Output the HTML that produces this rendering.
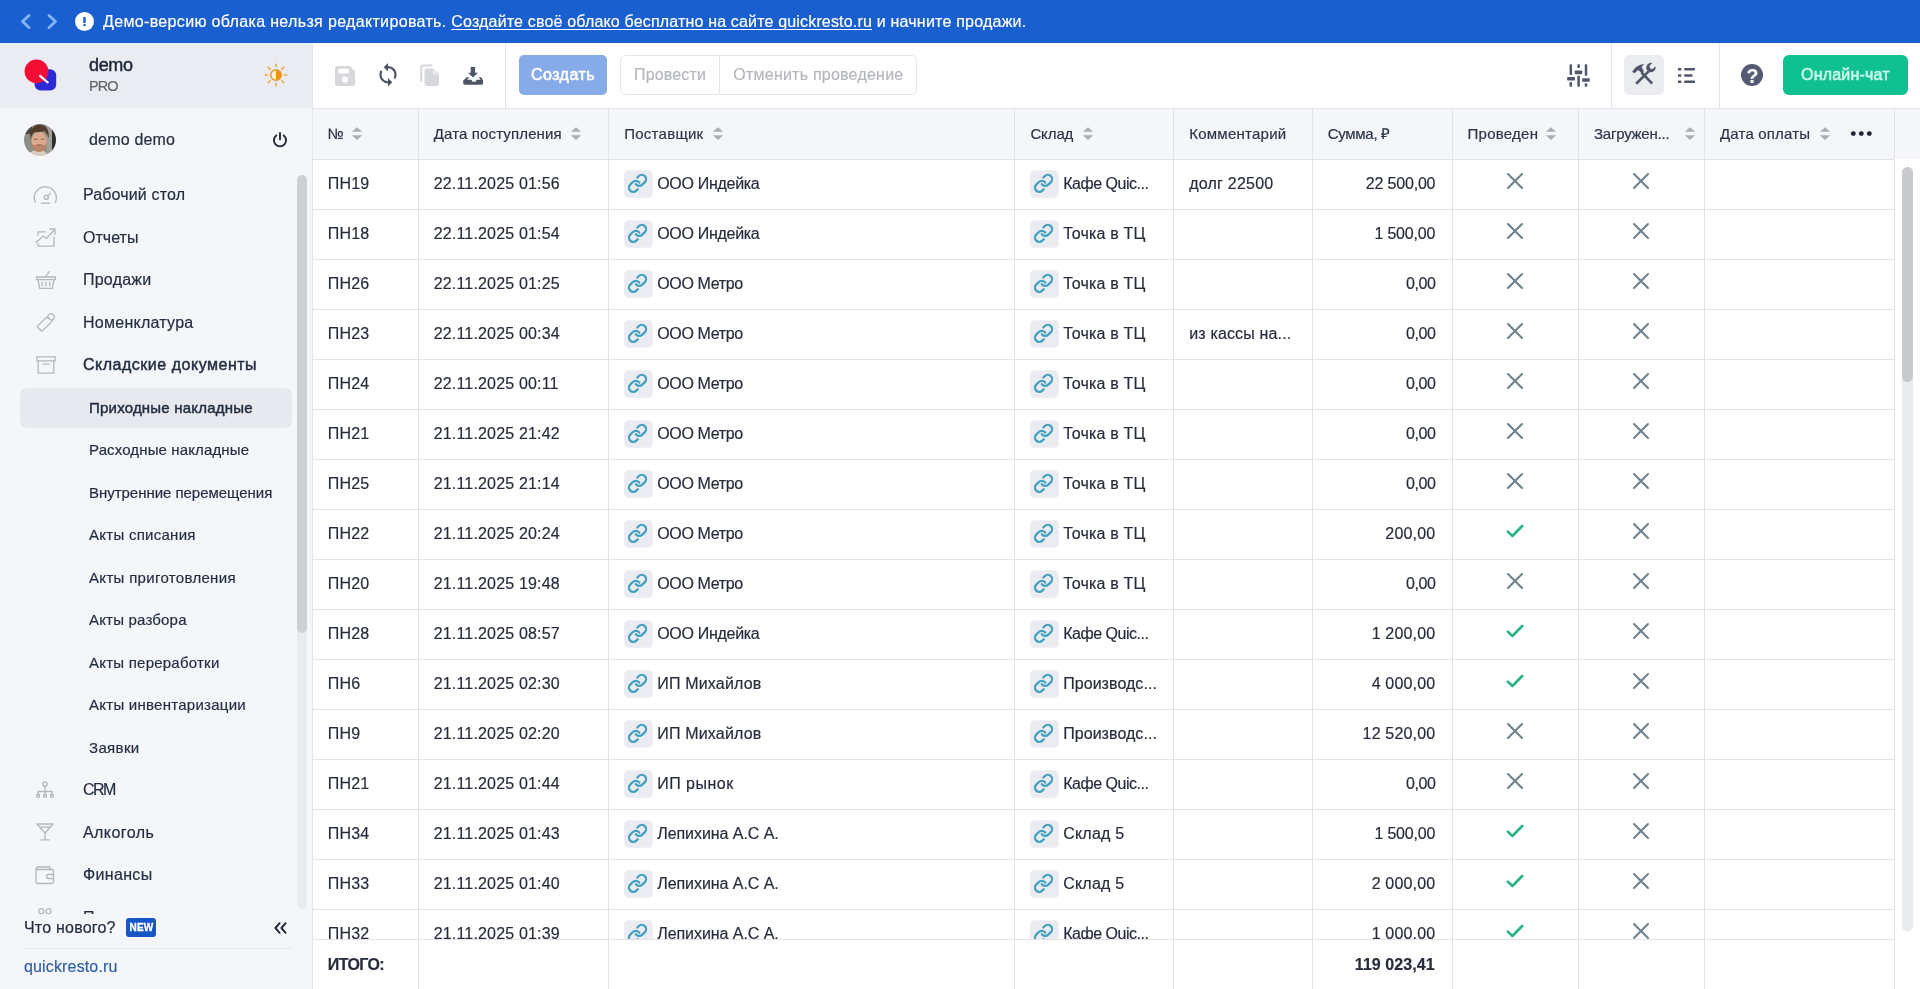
<!DOCTYPE html>
<html lang="ru">
<head>
<meta charset="utf-8">
<title>Приходные накладные</title>
<style>
*{box-sizing:border-box;margin:0;padding:0}
html,body{width:1920px;height:989px;overflow:hidden;background:#fff}
body{font-family:"Liberation Sans",sans-serif;color:#222b40;position:relative;font-size:16px}
div,span,svg{position:absolute}
span{white-space:pre;line-height:20px;-webkit-text-stroke:0.18px currentColor}
#banner,#side,#main{will-change:transform}
svg{display:block;overflow:visible}
#banner{left:0;top:0;width:1920px;height:43px;background:#1a5fd0;color:#fff}
#side{left:0;top:43px;width:312px;height:946px;background:#f5f6fa;overflow:hidden}
#sidehead{left:0;top:0;width:312px;height:65px;background:#ebecf2}
#main{left:312px;top:43px;width:1608px;height:946px;background:#fff;border-left:1px solid #e4e6ea;overflow:hidden}
.nav{left:83px;font-size:16px;color:#242d42}
.sub{left:89px;font-size:15px;color:#242d42}
.b{font-weight:700}
.m{-webkit-text-stroke:0.45px currentColor}
.vline{width:1px;background:#e2e3e7}
.hline{height:1px;background:#e2e3e7}
.th{font-size:15px;color:#2b3346}
.td{font-size:16px;color:#272c3c}
</style>
</head>
<body>
<div id="banner">
<svg style="left:20px;top:14px" width="11" height="15" viewBox="0 0 11 15"><path d="M9 1.5L2.5 7.5L9 13.5" fill="none" stroke="#82b4f8" stroke-width="2.900" stroke-linecap="round" stroke-linejoin="round"/></svg>
<svg style="left:47px;top:14px" width="11" height="15" viewBox="0 0 11 15"><path d="M2 1.5L8.5 7.5L2 13.5" fill="none" stroke="#82b4f8" stroke-width="2.900" stroke-linecap="round" stroke-linejoin="round"/></svg>
<svg style="left:75px;top:12px" width="19" height="19" viewBox="0 0 19 19"><circle cx="9.5" cy="9.5" r="9.5" fill="#fff"/><rect x="8.300" y="5" width="2.400" height="6" rx="0.600" fill="#1a5fd0"/><circle cx="9.500" cy="13" r="1.250" fill="#1a5fd0"/></svg>
<span style="left:103px;top:12px;font-size:16px;color:#fff"><span style="letter-spacing:0.34px;position:static">Демо-версию облака нельзя редактировать. </span><u style="text-decoration-thickness:1px;text-underline-offset:2px"><span style="letter-spacing:0.17px;position:static">Создайте своё облако бесплатно на сайте quickresto.ru</span></u><span style="letter-spacing:0.22px;position:static"> и начните продажи.</span></span>
</div>
<div id="side">
<div id="sidehead">
<svg style="left:24px;top:16px" width="34" height="32" viewBox="0 0 34 32"><rect x="10.6" y="10.2" width="21.6" height="21.4" rx="6" fill="#2f2ad8"/><circle cx="12.5" cy="12.4" r="11.9" fill="#f20d34"/><path d="M15.4 16.4L24.4 24" stroke="#fff" stroke-width="2.2" stroke-linecap="butt"/></svg>
<span class="m" style="letter-spacing:-0.34px;left:89px;top:12px;font-size:18px;color:#1d2538">demo</span>
<span style="left:89px;top:33px;font-size:14.5px;color:#62666f;letter-spacing:-0.9px">PRO</span>
<svg style="left:263px;top:19px" width="26" height="26" viewBox="0 0 26 26"><path d="M21.40 13.00L23.80 13.00M18.94 18.94L20.64 20.64M13.00 21.40L13.00 23.80M7.06 18.94L5.36 20.64M4.60 13.00L2.20 13.00M7.06 7.06L5.36 5.36M13.00 4.60L13.00 2.20M18.94 7.06L20.64 5.36" stroke="#e7a94c" stroke-width="1.600" stroke-linecap="round"/><circle cx="13" cy="13" r="5.200" fill="#fdf1dc"/><path d="M13 7.800a5.200 5.200 0 0 1 0 10.400z" fill="#f4920f"/><circle cx="13" cy="13" r="5.300" fill="none" stroke="#e39a26" stroke-width="1.500"/></svg>
</div>
<svg style="left:24px;top:81px" width="32" height="32" viewBox="0 0 32 32"><defs><clipPath id="av"><circle cx="16" cy="16" r="16"/></clipPath><filter id="bl" x="-20%" y="-20%" width="140%" height="140%"><feGaussianBlur stdDeviation="0.750"/></filter></defs><g clip-path="url(#av)"><g filter="url(#bl)"><rect x="-4" y="-4" width="40" height="40" fill="#8c8e87"/><rect x="-4" y="-4" width="12" height="14" fill="#4a4a47"/><rect x="23" y="-4" width="6" height="40" fill="#a19f99"/><rect x="28" y="-4" width="8" height="40" fill="#2f2d2a"/><path d="M3 36c1-7 4-9.500 12-10.500c6 1 9 3.500 10 10.500z" fill="#d9cdbf"/><ellipse cx="15.200" cy="17.500" rx="7.600" ry="10" fill="#dba98d"/><path d="M6.500 15c-1.500-9 3-14.500 9-14.500s10.500 5 9 14c-1-4.500-2.500-6.500-4.500-7.500c-2 1-6 1.500-9 1c-2.500 1.500-3.500 3.500-4.500 7z" fill="#553b2a"/><path d="M8 19.500c1.500 2 4 2.200 7.200 2.200s5.800-0.200 7.300-2.200c0 5-3 8.500-7.300 8.500S8 24.500 8 19.500z" fill="#b98566"/><path d="M11 21.300c2.500-1.300 6-1.300 8.500 0c-2.500 0.600-6 0.600-8.500 0z" fill="#99644a"/><path d="M9.800 15.300h3.600M16.800 15.300h3.600" stroke="#7a5844" stroke-width="0.900"/></g></g></svg>
<span style="letter-spacing:0.19px;left:89px;top:87px;color:#242d42">demo demo</span>
<svg style="left:272px;top:89px" width="16" height="16" viewBox="0 0 16 16"><g fill="none" stroke="#1d2538" stroke-width="1.9" stroke-linecap="round"><path d="M8 1v6.3"/><path d="M4.300 3.400a6.100 6.100 0 1 0 7.400 0"/></g></svg>
<svg style="left:32.8px;top:140.5px" width="25" height="20" viewBox="0 0 25 20"><g fill="none" stroke="#b3b6bc" stroke-width="1.3" stroke-linecap="round" stroke-linejoin="round"><path d="M2.300 18.400A11 11 0 1 1 22.300 18.400"/><circle cx="13.300" cy="13.400" r="2"/><path d="M14.700 12L17.600 9.100"/><path d="M8.400 19.200h8.500"/></g></svg>
<span class="nav" style="letter-spacing:0.14px;top:142px">Рабочий стол</span>
<svg style="left:35px;top:184.5px" width="21" height="20" viewBox="0 0 21 20"><g fill="none" stroke="#b3b6bc" stroke-width="1.3" stroke-linecap="round" stroke-linejoin="round"><path d="M0.900 14.400L8.400 8l3.100 2.500L19.400 1.600"/><path d="M14.700 1h5.300v5.300"/><path d="M10.500 3.800H3v3.500M3 15.500v2.700h16V9.100"/></g></svg>
<span class="nav" style="letter-spacing:0.02px;top:185px">Отчеты</span>
<svg style="left:35.5px;top:228px" width="20" height="19" viewBox="0 0 20 19"><g fill="none" stroke="#b3b6bc" stroke-width="1.3" stroke-linecap="round" stroke-linejoin="round"><rect x="0.600" y="6" width="18.800" height="2.600"/><path d="M2 9l1.700 8.400h12.600L18 9"/><path d="M6.200 11.200v3.600M10 11.200v3.600M13.800 11.200v3.600"/><path d="M9.400 6L13.200 0.600"/></g></svg>
<span class="nav" style="letter-spacing:0.23px;top:227px">Продажи</span>
<svg style="left:35.5px;top:268.5px" width="20" height="20" viewBox="0 0 20 20"><g fill="none" stroke="#b3b6bc" stroke-width="1.3" stroke-linecap="round" stroke-linejoin="round"><path d="M10.600 5.200L1.700 13.900a0.900 0.900 0 0 0 0 1.300l3.600 3.600a0.900 0.900 0 0 0 1.300 0L15.500 9.900a0.900 0.900 0 0 0 0-1.300L11.900 5.200a0.900 0.900 0 0 0-1.300 0z"/><path d="M12.300 6.800a3.300 3.300 0 1 1 3.400 1.400"/></g></svg>
<span class="nav" style="letter-spacing:0.26px;top:270px">Номенклатура</span>
<svg style="left:35.5px;top:313px" width="20" height="19" viewBox="0 0 20 19"><g fill="none" stroke="#b3b6bc" stroke-width="1.3" stroke-linecap="round" stroke-linejoin="round"><path d="M0.800 0.800h18.400v4H0.800z"/><path d="M2.200 5v12.200h15.600V5"/><path d="M7 8.200h6"/></g></svg>
<span class="nav m" style="letter-spacing:0.51px;top:312px">Складские документы</span>
<div style="left:20px;top:345px;width:272px;height:40px;border-radius:6px;background:#e7e9ef"></div>
<span class="sub m" style="letter-spacing:0.21px;top:354.5px">Приходные накладные</span>
<span class="sub" style="letter-spacing:0.13px;top:397px">Расходные накладные</span>
<span class="sub" style="letter-spacing:-0.03px;top:439.5px">Внутренние перемещения</span>
<span class="sub" style="letter-spacing:0.27px;top:482px">Акты списания</span>
<span class="sub" style="letter-spacing:0.32px;top:524.5px">Акты приготовления</span>
<span class="sub" style="letter-spacing:0.19px;top:567px">Акты разбора</span>
<span class="sub" style="letter-spacing:0.23px;top:609.5px">Акты переработки</span>
<span class="sub" style="letter-spacing:0.26px;top:652px">Акты инвентаризации</span>
<span class="sub" style="letter-spacing:0.35px;top:694.5px">Заявки</span>
<svg style="left:36px;top:738px" width="18" height="17" viewBox="0 0 18 17"><g fill="none" stroke="#b3b6bc" stroke-width="1.3" stroke-linecap="round" stroke-linejoin="round"><circle cx="9" cy="3" r="2.200"/><path d="M9 5.500v4M2 13.500v-3h14v3M9 9.500v4"/><rect x="0.800" y="13.500" width="2.600" height="2.600"/><rect x="7.700" y="13.500" width="2.600" height="2.600"/><rect x="14.600" y="13.500" width="2.600" height="2.600"/></g></svg>
<span class="nav" style="letter-spacing:-1.57px;top:737px">CRM</span>
<svg style="left:36px;top:780px" width="18" height="18" viewBox="0 0 18 18"><g fill="none" stroke="#b3b6bc" stroke-width="1.3" stroke-linecap="round" stroke-linejoin="round"><path d="M1 1h16L9 10z"/><path d="M9 10v6.500M5 16.800h8"/><path d="M4 4.200h10"/></g></svg>
<span class="nav" style="letter-spacing:0.43px;top:780px">Алкоголь</span>
<svg style="left:34.5px;top:823px" width="20" height="19" viewBox="0 0 20 19"><g fill="none" stroke="#b3b6bc" stroke-width="1.3" stroke-linecap="round" stroke-linejoin="round"><path d="M1 3.500a2.500 2.500 0 0 1 2.500-2.500H15v2"/><rect x="1" y="3.500" width="17.500" height="14" rx="1.500"/><path d="M18.500 8.500h-5a2 2 0 0 0 0 4h5"/></g></svg>
<span class="nav" style="letter-spacing:0.34px;top:822px">Финансы</span>
<svg style="left:38.3px;top:865.3px" width="14" height="7" viewBox="0 0 14 7"><g fill="none" stroke="#b3b6bc" stroke-width="1.3" stroke-linecap="round" stroke-linejoin="round"><circle cx="3.200" cy="3.200" r="2.500"/><circle cx="10.500" cy="3.200" r="2.500"/></g></svg>
<span class="nav" style="letter-spacing:0.17px;top:865px">Персонал</span>
<div style="left:297px;top:132px;width:10px;height:734px;border-radius:5px;background:#e9ebef"></div>
<div style="left:297px;top:132px;width:10px;height:458px;border-radius:5px;background:#cfd0d5"></div>
<div style="left:0;top:871px;width:312px;height:75px;background:#f5f6fa"></div>
<span style="letter-spacing:0.21px;left:24px;top:875px;color:#242d42">Что нового?</span>
<div style="left:126px;top:875.300px;width:30px;height:18.400px;border-radius:3px;background:#1757c4"></div>
<span style="left:129.600px;top:874.700px;font-size:10px;font-weight:700;color:#fff;letter-spacing:0.1px;line-height:20px;-webkit-text-stroke:0.3px #fff">NEW</span>
<svg style="left:274px;top:879px" width="13" height="12" viewBox="0 0 13 12"><path d="M5.600 1.200L1.400 6l4.200 4.800M11.600 1.200L7.400 6l4.200 4.800" fill="none" stroke="#1d2538" stroke-width="1.9" stroke-linecap="round" stroke-linejoin="round"/></svg>
<div class="hline" style="left:24px;top:905px;width:268px;background:#e6e8ec"></div>
<span style="letter-spacing:0.15px;left:24px;top:914px;color:#2d5fa6">quickresto.ru</span>
</div>
<div id="main">
<svg style="left:22px;top:23px" width="20" height="20" viewBox="0 0 20 20"><path d="M2.500 0h12.300L20 5.200V17.500a2.500 2.500 0 0 1-2.500 2.500h-15A2.500 2.500 0 0 1 0 17.500v-15A2.500 2.500 0 0 1 2.500 0z" fill="#d6d8dc"/><rect x="3.300" y="2.800" width="10.500" height="4.600" rx="0.600" fill="#fff"/><circle cx="10" cy="13.600" r="3.100" fill="#fff"/></svg>
<svg style="left:64px;top:20px" width="22" height="24" viewBox="0 0 24 24"><path d="M12 4V1L8 5l4 4V6c3.310 0 6 2.690 6 6 0 1.010-.25 1.970-.7 2.800l1.460 1.460A7.930 7.930 0 0 0 20 12c0-4.420-3.580-8-8-8zm0 14c-3.310 0-6-2.690-6-6 0-1.010.25-1.970.7-2.800L5.240 7.740A7.930 7.930 0 0 0 4 12c0 4.420 3.580 8 8 8v3l4-4-4-4v3z" fill="#4e5467" transform="translate(12 12) scale(1.170) translate(-12 -12.300)"/></svg>
<svg style="left:107px;top:22px" width="19" height="21" viewBox="0 0 19 21"><path d="M1.200 17V2.200A1.700 1.700 0 0 1 2.900 0.500H12.500" fill="none" stroke="#d6d8dc" stroke-width="2.100"/><path d="M6.500 3.600h6.800L19 9.300V19a2 2 0 0 1-2 2H6.500a2 2 0 0 1-2-2V5.600a2 2 0 0 1 2-2z" fill="#d6d8dc"/><path d="M13 4.500V9.600h5.200z" fill="#eceef0"/></svg>
<svg style="left:150px;top:23px" width="21" height="19" viewBox="0 0 21 19"><path d="M7.700 1h4.400v5.700h2.800L10 11.400 5 6.700h2.700z" fill="#4e5467"/><path d="M3.800 11.200h2.500l-2 2.600h4.100l1 2h3.200l1-2h4.100l-2-2.600h2.500L20.100 14.600v2.700a1.400 1.400 0 0 1-1.400 1.400h-17.100A1.400 1.400 0 0 1 0.200 17.300v-2.700z" fill="#4e5467"/></svg>
<div class="vline" style="left:192px;top:0;height:65px"></div>
<div style="left:206px;top:12px;width:88px;height:40px;border-radius:5px;background:#87abe8"></div>
<span class="m" style="letter-spacing:0.45px;left:218px;top:22px;color:#fff;-webkit-text-stroke-width:0.6px">Создать</span>
<div style="left:307px;top:12px;width:297px;height:40px;border-radius:5px;border:1px solid #e4e6ea;background:#fff"></div>
<div class="vline" style="left:406px;top:12px;height:40px;background:#e4e6ea"></div>
<span style="letter-spacing:0.17px;left:321px;top:22px;color:#b3b6bc">Провести</span>
<span style="letter-spacing:0.23px;left:420.29999999999995px;top:22px;color:#b3b6bc">Отменить проведение</span>
<svg style="left:1254px;top:21px" width="23" height="23" viewBox="0 0 23 23"><g fill="#51576b"><rect x="2.550" y="0.200" width="2.500" height="10.800" rx="0.700"/><rect x="2.550" y="18.100" width="2.500" height="4.600" rx="0.700"/><rect x="0.100" y="13.100" width="7.900" height="3.400" rx="0.800"/><rect x="10.350" y="0.200" width="2.500" height="3.700" rx="0.700"/><rect x="10.350" y="11.800" width="2.500" height="10.900" rx="0.700"/><rect x="7.800" y="6.400" width="7.400" height="3.800" rx="0.800"/><rect x="17.750" y="0.200" width="2.500" height="11.600" rx="0.700"/><rect x="17.750" y="19.300" width="2.500" height="3.400" rx="0.700"/><rect x="15.100" y="14.300" width="7.700" height="3.400" rx="0.800"/></g></svg>
<div class="vline" style="left:1298px;top:0;height:65px"></div>
<div style="left:1311px;top:12px;width:40px;height:40px;border-radius:5px;background:#ebecf0"></div>
<svg style="left:1318px;top:19px" width="26" height="24" viewBox="0 0 26 24"><g fill="none" stroke="#51576b" stroke-linecap="butt"><path d="M21.200 21.600L10.400 10.200" stroke-width="2.700"/><path d="M5.200 21.800L17.600 9.400" stroke-width="2.700"/></g><g fill="#51576b"><path d="M1.100 10.100L2.800 7.400C5 4.500 9 2.200 13.600 2C12 3.200 11 4.200 10.800 5.400L12.900 9.200L10.700 11.200L7.600 8.200C6.200 8.400 5 9.400 3.900 11.200Z"/><path d="M24.600 4.200a5 5 0 0 1-6.600 5.800l-2.500-2.500a5 5 0 0 1 5.800-6.600l-2.800 2.900 0.500 2.800 2.700 0.500z"/></g></svg>
<svg style="left:1364px;top:24px" width="19" height="17" viewBox="0 0 19 17"><g fill="#51576b"><rect x="0.900" y="0.900" width="3.400" height="2.500" rx="0.400"/><rect x="7.200" y="0.900" width="10.800" height="2.500" rx="0.600"/><rect x="0.900" y="7.200" width="3.400" height="2.500" rx="0.400"/><rect x="7.200" y="7.200" width="8.300" height="2.500" rx="0.600"/><rect x="0.900" y="13.600" width="3.400" height="2.500" rx="0.400"/><rect x="7.200" y="13.600" width="10.800" height="2.500" rx="0.600"/></g></svg>
<div class="vline" style="left:1406px;top:0;height:65px"></div>
<div style="left:1428px;top:21px;width:22.4px;height:22.4px;border-radius:50%;background:#535a72"></div>
<span style="left:1433.6px;top:21.5px;font-size:19.5px;font-weight:700;color:#fff;line-height:22px">?</span>
<div style="left:1470px;top:12px;width:125px;height:40px;border-radius:6px;background:#0fc091"></div>
<span class="m" style="letter-spacing:0.19px;left:1488px;top:22px;color:#cdfbeb;-webkit-text-stroke-width:0.5px">Онлайн-чат</span>
<div class="hline" style="left:0;top:65px;width:1607px"></div>
<div style="left:0;top:66px;width:1607px;height:50px;background:#f5f6fa"></div>
<div class="hline" style="left:0;top:116px;width:1582px"></div>
<div class="vline" style="left:105px;top:66px;height:880px"></div>
<div class="vline" style="left:295px;top:66px;height:880px"></div>
<div class="vline" style="left:701px;top:66px;height:880px"></div>
<div class="vline" style="left:860px;top:66px;height:880px"></div>
<div class="vline" style="left:999px;top:66px;height:880px"></div>
<div class="vline" style="left:1139px;top:66px;height:880px"></div>
<div class="vline" style="left:1265px;top:66px;height:880px"></div>
<div class="vline" style="left:1391px;top:66px;height:880px"></div>
<div class="vline" style="left:1581px;top:66px;height:880px"></div>
<span class="th" style="letter-spacing:0.13px;left:14.800000000000011px;top:81px">№</span>
<svg style="left:39px;top:84px" width="10" height="13" viewBox="0 0 10 13"><path d="M5 0.200L10.200 4.800H-0.200z" fill="#abadb1"/><path d="M5 13L10.200 8.200H-0.200z" fill="#abadb1"/></svg>
<span class="th" style="letter-spacing:0.14px;left:120.69999999999999px;top:81px">Дата поступления</span>
<svg style="left:258px;top:84px" width="10" height="13" viewBox="0 0 10 13"><path d="M5 0.200L10.200 4.800H-0.200z" fill="#abadb1"/><path d="M5 13L10.200 8.200H-0.200z" fill="#abadb1"/></svg>
<span class="th" style="letter-spacing:0.26px;left:311.20000000000005px;top:81px">Поставщик</span>
<svg style="left:400px;top:84px" width="10" height="13" viewBox="0 0 10 13"><path d="M5 0.200L10.200 4.800H-0.200z" fill="#abadb1"/><path d="M5 13L10.200 8.200H-0.200z" fill="#abadb1"/></svg>
<span class="th" style="letter-spacing:-0.11px;left:717.4000000000001px;top:81px">Склад</span>
<svg style="left:770px;top:84px" width="10" height="13" viewBox="0 0 10 13"><path d="M5 0.200L10.200 4.800H-0.200z" fill="#abadb1"/><path d="M5 13L10.200 8.200H-0.200z" fill="#abadb1"/></svg>
<span class="th" style="letter-spacing:0.25px;left:876.2px;top:81px">Комментарий</span>
<span class="th" style="letter-spacing:-0.28px;left:1014.7px;top:81px">Сумма, ₽</span>
<span class="th" style="letter-spacing:0.26px;left:1154.5px;top:81px">Проведен</span>
<svg style="left:1233px;top:84px" width="10" height="13" viewBox="0 0 10 13"><path d="M5 0.200L10.200 4.800H-0.200z" fill="#abadb1"/><path d="M5 13L10.200 8.200H-0.200z" fill="#abadb1"/></svg>
<span class="th" style="letter-spacing:-0.23px;left:1281px;top:81px">Загружен...</span>
<svg style="left:1372px;top:84px" width="10" height="13" viewBox="0 0 10 13"><path d="M5 0.200L10.200 4.800H-0.200z" fill="#abadb1"/><path d="M5 13L10.200 8.200H-0.200z" fill="#abadb1"/></svg>
<span class="th" style="letter-spacing:0.17px;left:1407px;top:81px">Дата оплаты</span>
<svg style="left:1507px;top:84px" width="10" height="13" viewBox="0 0 10 13"><path d="M5 0.200L10.200 4.800H-0.200z" fill="#abadb1"/><path d="M5 13L10.200 8.200H-0.200z" fill="#abadb1"/></svg>
<svg style="left:1538px;top:88px" width="21" height="5" viewBox="0 0 21 5"><circle cx="2.300" cy="2.600" r="2.450" fill="#1d2538"/><circle cx="10.300" cy="2.600" r="2.450" fill="#1d2538"/><circle cx="18.300" cy="2.600" r="2.450" fill="#1d2538"/></svg>
<span class="td" style="letter-spacing:0.17px;left:14.800000000000011px;top:131px">ПН19</span>
<span class="td" style="letter-spacing:0.17px;left:120.69999999999999px;top:131px">22.11.2025 01:56</span>
<svg style="left:311px;top:127.1px" width="29" height="28" viewBox="0 0 29 28"><rect x="0.100" y="0.200" width="28.700" height="27.600" rx="4.500" fill="#ebecf2"/><g transform="translate(3.270 3.070) scale(0.857)" fill="none" stroke="#43a0bf" stroke-width="2.650" stroke-linecap="round" stroke-linejoin="round"><path d="M10 13a5 5 0 0 0 7.540.540l3-3a5 5 0 0 0-7.070-7.070l-1.720 1.710"/><path d="M14 11a5 5 0 0 0-7.540-.540l-3 3a5 5 0 0 0 7.070 7.070l1.710-1.710"/></g></svg>
<span class="td" style="letter-spacing:-0.30px;left:344.20000000000005px;top:131px">ООО Индейка</span>
<svg style="left:717px;top:127.1px" width="29" height="28" viewBox="0 0 29 28"><rect x="0.100" y="0.200" width="28.700" height="27.600" rx="4.500" fill="#ebecf2"/><g transform="translate(3.270 3.070) scale(0.857)" fill="none" stroke="#43a0bf" stroke-width="2.650" stroke-linecap="round" stroke-linejoin="round"><path d="M10 13a5 5 0 0 0 7.540.540l3-3a5 5 0 0 0-7.070-7.070l-1.720 1.710"/><path d="M14 11a5 5 0 0 0-7.540-.540l-3 3a5 5 0 0 0 7.070 7.070l1.710-1.710"/></g></svg>
<span class="td" style="letter-spacing:-0.48px;left:750.2px;top:131px">Кафе Quic...</span>
<span class="td" style="letter-spacing:0.22px;left:876.2px;top:131px">долг 22500</span>
<span class="td" style="letter-spacing:-0.19px;right:484.7px;top:131px">22 500,00</span>
<svg style="left:1193px;top:129px" width="18" height="18" viewBox="0 0 18 18"><path d="M2 2L16 16M16 2L2 16" stroke="#6f818d" stroke-width="2.100" stroke-linecap="round" fill="none"/></svg>
<svg style="left:1319px;top:129px" width="18" height="18" viewBox="0 0 18 18"><path d="M2 2L16 16M16 2L2 16" stroke="#6f818d" stroke-width="2.100" stroke-linecap="round" fill="none"/></svg>
<div class="hline" style="left:0;top:166px;width:1582px"></div>
<span class="td" style="letter-spacing:0.17px;left:14.800000000000011px;top:181px">ПН18</span>
<span class="td" style="letter-spacing:0.17px;left:120.69999999999999px;top:181px">22.11.2025 01:54</span>
<svg style="left:311px;top:177.1px" width="29" height="28" viewBox="0 0 29 28"><rect x="0.100" y="0.200" width="28.700" height="27.600" rx="4.500" fill="#ebecf2"/><g transform="translate(3.270 3.070) scale(0.857)" fill="none" stroke="#43a0bf" stroke-width="2.650" stroke-linecap="round" stroke-linejoin="round"><path d="M10 13a5 5 0 0 0 7.540.540l3-3a5 5 0 0 0-7.070-7.070l-1.720 1.710"/><path d="M14 11a5 5 0 0 0-7.540-.540l-3 3a5 5 0 0 0 7.070 7.070l1.710-1.710"/></g></svg>
<span class="td" style="letter-spacing:-0.30px;left:344.20000000000005px;top:181px">ООО Индейка</span>
<svg style="left:717px;top:177.1px" width="29" height="28" viewBox="0 0 29 28"><rect x="0.100" y="0.200" width="28.700" height="27.600" rx="4.500" fill="#ebecf2"/><g transform="translate(3.270 3.070) scale(0.857)" fill="none" stroke="#43a0bf" stroke-width="2.650" stroke-linecap="round" stroke-linejoin="round"><path d="M10 13a5 5 0 0 0 7.540.540l3-3a5 5 0 0 0-7.070-7.070l-1.720 1.710"/><path d="M14 11a5 5 0 0 0-7.540-.540l-3 3a5 5 0 0 0 7.070 7.070l1.710-1.710"/></g></svg>
<span class="td" style="letter-spacing:0.16px;left:750.2px;top:181px">Точка в ТЦ</span>
<span class="td" style="letter-spacing:-0.17px;right:484.7px;top:181px">1 500,00</span>
<svg style="left:1193px;top:179px" width="18" height="18" viewBox="0 0 18 18"><path d="M2 2L16 16M16 2L2 16" stroke="#6f818d" stroke-width="2.100" stroke-linecap="round" fill="none"/></svg>
<svg style="left:1319px;top:179px" width="18" height="18" viewBox="0 0 18 18"><path d="M2 2L16 16M16 2L2 16" stroke="#6f818d" stroke-width="2.100" stroke-linecap="round" fill="none"/></svg>
<div class="hline" style="left:0;top:216px;width:1582px"></div>
<span class="td" style="letter-spacing:0.17px;left:14.800000000000011px;top:231px">ПН26</span>
<span class="td" style="letter-spacing:0.17px;left:120.69999999999999px;top:231px">22.11.2025 01:25</span>
<svg style="left:311px;top:227.10000000000002px" width="29" height="28" viewBox="0 0 29 28"><rect x="0.100" y="0.200" width="28.700" height="27.600" rx="4.500" fill="#ebecf2"/><g transform="translate(3.270 3.070) scale(0.857)" fill="none" stroke="#43a0bf" stroke-width="2.650" stroke-linecap="round" stroke-linejoin="round"><path d="M10 13a5 5 0 0 0 7.540.540l3-3a5 5 0 0 0-7.070-7.070l-1.720 1.710"/><path d="M14 11a5 5 0 0 0-7.540-.540l-3 3a5 5 0 0 0 7.070 7.070l1.710-1.710"/></g></svg>
<span class="td" style="letter-spacing:-0.35px;left:344.20000000000005px;top:231px">ООО Метро</span>
<svg style="left:717px;top:227.10000000000002px" width="29" height="28" viewBox="0 0 29 28"><rect x="0.100" y="0.200" width="28.700" height="27.600" rx="4.500" fill="#ebecf2"/><g transform="translate(3.270 3.070) scale(0.857)" fill="none" stroke="#43a0bf" stroke-width="2.650" stroke-linecap="round" stroke-linejoin="round"><path d="M10 13a5 5 0 0 0 7.540.540l3-3a5 5 0 0 0-7.070-7.070l-1.720 1.710"/><path d="M14 11a5 5 0 0 0-7.540-.540l-3 3a5 5 0 0 0 7.070 7.070l1.710-1.710"/></g></svg>
<span class="td" style="letter-spacing:0.16px;left:750.2px;top:231px">Точка в ТЦ</span>
<span class="td" style="letter-spacing:-0.48px;right:484.7px;top:231px">0,00</span>
<svg style="left:1193px;top:229px" width="18" height="18" viewBox="0 0 18 18"><path d="M2 2L16 16M16 2L2 16" stroke="#6f818d" stroke-width="2.100" stroke-linecap="round" fill="none"/></svg>
<svg style="left:1319px;top:229px" width="18" height="18" viewBox="0 0 18 18"><path d="M2 2L16 16M16 2L2 16" stroke="#6f818d" stroke-width="2.100" stroke-linecap="round" fill="none"/></svg>
<div class="hline" style="left:0;top:266px;width:1582px"></div>
<span class="td" style="letter-spacing:0.17px;left:14.800000000000011px;top:281px">ПН23</span>
<span class="td" style="letter-spacing:0.17px;left:120.69999999999999px;top:281px">22.11.2025 00:34</span>
<svg style="left:311px;top:277.1px" width="29" height="28" viewBox="0 0 29 28"><rect x="0.100" y="0.200" width="28.700" height="27.600" rx="4.500" fill="#ebecf2"/><g transform="translate(3.270 3.070) scale(0.857)" fill="none" stroke="#43a0bf" stroke-width="2.650" stroke-linecap="round" stroke-linejoin="round"><path d="M10 13a5 5 0 0 0 7.540.540l3-3a5 5 0 0 0-7.070-7.070l-1.720 1.710"/><path d="M14 11a5 5 0 0 0-7.540-.540l-3 3a5 5 0 0 0 7.070 7.070l1.710-1.710"/></g></svg>
<span class="td" style="letter-spacing:-0.35px;left:344.20000000000005px;top:281px">ООО Метро</span>
<svg style="left:717px;top:277.1px" width="29" height="28" viewBox="0 0 29 28"><rect x="0.100" y="0.200" width="28.700" height="27.600" rx="4.500" fill="#ebecf2"/><g transform="translate(3.270 3.070) scale(0.857)" fill="none" stroke="#43a0bf" stroke-width="2.650" stroke-linecap="round" stroke-linejoin="round"><path d="M10 13a5 5 0 0 0 7.540.540l3-3a5 5 0 0 0-7.070-7.070l-1.720 1.710"/><path d="M14 11a5 5 0 0 0-7.540-.540l-3 3a5 5 0 0 0 7.070 7.070l1.710-1.710"/></g></svg>
<span class="td" style="letter-spacing:0.16px;left:750.2px;top:281px">Точка в ТЦ</span>
<span class="td" style="letter-spacing:0.16px;left:876.2px;top:281px">из кассы на...</span>
<span class="td" style="letter-spacing:-0.48px;right:484.7px;top:281px">0,00</span>
<svg style="left:1193px;top:279px" width="18" height="18" viewBox="0 0 18 18"><path d="M2 2L16 16M16 2L2 16" stroke="#6f818d" stroke-width="2.100" stroke-linecap="round" fill="none"/></svg>
<svg style="left:1319px;top:279px" width="18" height="18" viewBox="0 0 18 18"><path d="M2 2L16 16M16 2L2 16" stroke="#6f818d" stroke-width="2.100" stroke-linecap="round" fill="none"/></svg>
<div class="hline" style="left:0;top:316px;width:1582px"></div>
<span class="td" style="letter-spacing:0.17px;left:14.800000000000011px;top:331px">ПН24</span>
<span class="td" style="letter-spacing:0.17px;left:120.69999999999999px;top:331px">22.11.2025 00:11</span>
<svg style="left:311px;top:327.1px" width="29" height="28" viewBox="0 0 29 28"><rect x="0.100" y="0.200" width="28.700" height="27.600" rx="4.500" fill="#ebecf2"/><g transform="translate(3.270 3.070) scale(0.857)" fill="none" stroke="#43a0bf" stroke-width="2.650" stroke-linecap="round" stroke-linejoin="round"><path d="M10 13a5 5 0 0 0 7.540.540l3-3a5 5 0 0 0-7.070-7.070l-1.720 1.710"/><path d="M14 11a5 5 0 0 0-7.540-.540l-3 3a5 5 0 0 0 7.070 7.070l1.710-1.710"/></g></svg>
<span class="td" style="letter-spacing:-0.35px;left:344.20000000000005px;top:331px">ООО Метро</span>
<svg style="left:717px;top:327.1px" width="29" height="28" viewBox="0 0 29 28"><rect x="0.100" y="0.200" width="28.700" height="27.600" rx="4.500" fill="#ebecf2"/><g transform="translate(3.270 3.070) scale(0.857)" fill="none" stroke="#43a0bf" stroke-width="2.650" stroke-linecap="round" stroke-linejoin="round"><path d="M10 13a5 5 0 0 0 7.540.540l3-3a5 5 0 0 0-7.070-7.070l-1.720 1.710"/><path d="M14 11a5 5 0 0 0-7.540-.540l-3 3a5 5 0 0 0 7.070 7.070l1.710-1.710"/></g></svg>
<span class="td" style="letter-spacing:0.16px;left:750.2px;top:331px">Точка в ТЦ</span>
<span class="td" style="letter-spacing:-0.48px;right:484.7px;top:331px">0,00</span>
<svg style="left:1193px;top:329px" width="18" height="18" viewBox="0 0 18 18"><path d="M2 2L16 16M16 2L2 16" stroke="#6f818d" stroke-width="2.100" stroke-linecap="round" fill="none"/></svg>
<svg style="left:1319px;top:329px" width="18" height="18" viewBox="0 0 18 18"><path d="M2 2L16 16M16 2L2 16" stroke="#6f818d" stroke-width="2.100" stroke-linecap="round" fill="none"/></svg>
<div class="hline" style="left:0;top:366px;width:1582px"></div>
<span class="td" style="letter-spacing:0.17px;left:14.800000000000011px;top:381px">ПН21</span>
<span class="td" style="letter-spacing:0.17px;left:120.69999999999999px;top:381px">21.11.2025 21:42</span>
<svg style="left:311px;top:377.1px" width="29" height="28" viewBox="0 0 29 28"><rect x="0.100" y="0.200" width="28.700" height="27.600" rx="4.500" fill="#ebecf2"/><g transform="translate(3.270 3.070) scale(0.857)" fill="none" stroke="#43a0bf" stroke-width="2.650" stroke-linecap="round" stroke-linejoin="round"><path d="M10 13a5 5 0 0 0 7.540.540l3-3a5 5 0 0 0-7.070-7.070l-1.720 1.710"/><path d="M14 11a5 5 0 0 0-7.540-.540l-3 3a5 5 0 0 0 7.070 7.070l1.710-1.710"/></g></svg>
<span class="td" style="letter-spacing:-0.35px;left:344.20000000000005px;top:381px">ООО Метро</span>
<svg style="left:717px;top:377.1px" width="29" height="28" viewBox="0 0 29 28"><rect x="0.100" y="0.200" width="28.700" height="27.600" rx="4.500" fill="#ebecf2"/><g transform="translate(3.270 3.070) scale(0.857)" fill="none" stroke="#43a0bf" stroke-width="2.650" stroke-linecap="round" stroke-linejoin="round"><path d="M10 13a5 5 0 0 0 7.540.540l3-3a5 5 0 0 0-7.070-7.070l-1.720 1.710"/><path d="M14 11a5 5 0 0 0-7.540-.540l-3 3a5 5 0 0 0 7.070 7.070l1.710-1.710"/></g></svg>
<span class="td" style="letter-spacing:0.16px;left:750.2px;top:381px">Точка в ТЦ</span>
<span class="td" style="letter-spacing:-0.48px;right:484.7px;top:381px">0,00</span>
<svg style="left:1193px;top:379px" width="18" height="18" viewBox="0 0 18 18"><path d="M2 2L16 16M16 2L2 16" stroke="#6f818d" stroke-width="2.100" stroke-linecap="round" fill="none"/></svg>
<svg style="left:1319px;top:379px" width="18" height="18" viewBox="0 0 18 18"><path d="M2 2L16 16M16 2L2 16" stroke="#6f818d" stroke-width="2.100" stroke-linecap="round" fill="none"/></svg>
<div class="hline" style="left:0;top:416px;width:1582px"></div>
<span class="td" style="letter-spacing:0.17px;left:14.800000000000011px;top:431px">ПН25</span>
<span class="td" style="letter-spacing:0.17px;left:120.69999999999999px;top:431px">21.11.2025 21:14</span>
<svg style="left:311px;top:427.1px" width="29" height="28" viewBox="0 0 29 28"><rect x="0.100" y="0.200" width="28.700" height="27.600" rx="4.500" fill="#ebecf2"/><g transform="translate(3.270 3.070) scale(0.857)" fill="none" stroke="#43a0bf" stroke-width="2.650" stroke-linecap="round" stroke-linejoin="round"><path d="M10 13a5 5 0 0 0 7.540.540l3-3a5 5 0 0 0-7.070-7.070l-1.720 1.710"/><path d="M14 11a5 5 0 0 0-7.540-.540l-3 3a5 5 0 0 0 7.070 7.070l1.710-1.710"/></g></svg>
<span class="td" style="letter-spacing:-0.35px;left:344.20000000000005px;top:431px">ООО Метро</span>
<svg style="left:717px;top:427.1px" width="29" height="28" viewBox="0 0 29 28"><rect x="0.100" y="0.200" width="28.700" height="27.600" rx="4.500" fill="#ebecf2"/><g transform="translate(3.270 3.070) scale(0.857)" fill="none" stroke="#43a0bf" stroke-width="2.650" stroke-linecap="round" stroke-linejoin="round"><path d="M10 13a5 5 0 0 0 7.540.540l3-3a5 5 0 0 0-7.070-7.070l-1.720 1.710"/><path d="M14 11a5 5 0 0 0-7.540-.540l-3 3a5 5 0 0 0 7.070 7.070l1.710-1.710"/></g></svg>
<span class="td" style="letter-spacing:0.16px;left:750.2px;top:431px">Точка в ТЦ</span>
<span class="td" style="letter-spacing:-0.48px;right:484.7px;top:431px">0,00</span>
<svg style="left:1193px;top:429px" width="18" height="18" viewBox="0 0 18 18"><path d="M2 2L16 16M16 2L2 16" stroke="#6f818d" stroke-width="2.100" stroke-linecap="round" fill="none"/></svg>
<svg style="left:1319px;top:429px" width="18" height="18" viewBox="0 0 18 18"><path d="M2 2L16 16M16 2L2 16" stroke="#6f818d" stroke-width="2.100" stroke-linecap="round" fill="none"/></svg>
<div class="hline" style="left:0;top:466px;width:1582px"></div>
<span class="td" style="letter-spacing:0.17px;left:14.800000000000011px;top:481px">ПН22</span>
<span class="td" style="letter-spacing:0.17px;left:120.69999999999999px;top:481px">21.11.2025 20:24</span>
<svg style="left:311px;top:477.1px" width="29" height="28" viewBox="0 0 29 28"><rect x="0.100" y="0.200" width="28.700" height="27.600" rx="4.500" fill="#ebecf2"/><g transform="translate(3.270 3.070) scale(0.857)" fill="none" stroke="#43a0bf" stroke-width="2.650" stroke-linecap="round" stroke-linejoin="round"><path d="M10 13a5 5 0 0 0 7.540.540l3-3a5 5 0 0 0-7.070-7.070l-1.720 1.710"/><path d="M14 11a5 5 0 0 0-7.540-.540l-3 3a5 5 0 0 0 7.070 7.070l1.710-1.710"/></g></svg>
<span class="td" style="letter-spacing:-0.35px;left:344.20000000000005px;top:481px">ООО Метро</span>
<svg style="left:717px;top:477.1px" width="29" height="28" viewBox="0 0 29 28"><rect x="0.100" y="0.200" width="28.700" height="27.600" rx="4.500" fill="#ebecf2"/><g transform="translate(3.270 3.070) scale(0.857)" fill="none" stroke="#43a0bf" stroke-width="2.650" stroke-linecap="round" stroke-linejoin="round"><path d="M10 13a5 5 0 0 0 7.540.540l3-3a5 5 0 0 0-7.070-7.070l-1.720 1.710"/><path d="M14 11a5 5 0 0 0-7.540-.540l-3 3a5 5 0 0 0 7.070 7.070l1.710-1.710"/></g></svg>
<span class="td" style="letter-spacing:0.16px;left:750.2px;top:481px">Точка в ТЦ</span>
<span class="td" style="letter-spacing:0.17px;right:484.7px;top:481px">200,00</span>
<svg style="left:1193px;top:481px" width="18" height="14" viewBox="0 0 18 14"><path d="M1.8 7.6L6.4 12L16.2 2" stroke="#27b384" stroke-width="2.6" stroke-linecap="round" stroke-linejoin="round" fill="none"/></svg>
<svg style="left:1319px;top:479px" width="18" height="18" viewBox="0 0 18 18"><path d="M2 2L16 16M16 2L2 16" stroke="#6f818d" stroke-width="2.100" stroke-linecap="round" fill="none"/></svg>
<div class="hline" style="left:0;top:516px;width:1582px"></div>
<span class="td" style="letter-spacing:0.17px;left:14.800000000000011px;top:531px">ПН20</span>
<span class="td" style="letter-spacing:0.17px;left:120.69999999999999px;top:531px">21.11.2025 19:48</span>
<svg style="left:311px;top:527.1px" width="29" height="28" viewBox="0 0 29 28"><rect x="0.100" y="0.200" width="28.700" height="27.600" rx="4.500" fill="#ebecf2"/><g transform="translate(3.270 3.070) scale(0.857)" fill="none" stroke="#43a0bf" stroke-width="2.650" stroke-linecap="round" stroke-linejoin="round"><path d="M10 13a5 5 0 0 0 7.540.540l3-3a5 5 0 0 0-7.070-7.070l-1.720 1.710"/><path d="M14 11a5 5 0 0 0-7.540-.540l-3 3a5 5 0 0 0 7.070 7.070l1.710-1.710"/></g></svg>
<span class="td" style="letter-spacing:-0.35px;left:344.20000000000005px;top:531px">ООО Метро</span>
<svg style="left:717px;top:527.1px" width="29" height="28" viewBox="0 0 29 28"><rect x="0.100" y="0.200" width="28.700" height="27.600" rx="4.500" fill="#ebecf2"/><g transform="translate(3.270 3.070) scale(0.857)" fill="none" stroke="#43a0bf" stroke-width="2.650" stroke-linecap="round" stroke-linejoin="round"><path d="M10 13a5 5 0 0 0 7.540.540l3-3a5 5 0 0 0-7.070-7.070l-1.720 1.710"/><path d="M14 11a5 5 0 0 0-7.540-.540l-3 3a5 5 0 0 0 7.070 7.070l1.710-1.710"/></g></svg>
<span class="td" style="letter-spacing:0.16px;left:750.2px;top:531px">Точка в ТЦ</span>
<span class="td" style="letter-spacing:-0.48px;right:484.7px;top:531px">0,00</span>
<svg style="left:1193px;top:529px" width="18" height="18" viewBox="0 0 18 18"><path d="M2 2L16 16M16 2L2 16" stroke="#6f818d" stroke-width="2.100" stroke-linecap="round" fill="none"/></svg>
<svg style="left:1319px;top:529px" width="18" height="18" viewBox="0 0 18 18"><path d="M2 2L16 16M16 2L2 16" stroke="#6f818d" stroke-width="2.100" stroke-linecap="round" fill="none"/></svg>
<div class="hline" style="left:0;top:566px;width:1582px"></div>
<span class="td" style="letter-spacing:0.17px;left:14.800000000000011px;top:581px">ПН28</span>
<span class="td" style="letter-spacing:0.17px;left:120.69999999999999px;top:581px">21.11.2025 08:57</span>
<svg style="left:311px;top:577.1px" width="29" height="28" viewBox="0 0 29 28"><rect x="0.100" y="0.200" width="28.700" height="27.600" rx="4.500" fill="#ebecf2"/><g transform="translate(3.270 3.070) scale(0.857)" fill="none" stroke="#43a0bf" stroke-width="2.650" stroke-linecap="round" stroke-linejoin="round"><path d="M10 13a5 5 0 0 0 7.540.540l3-3a5 5 0 0 0-7.070-7.070l-1.720 1.710"/><path d="M14 11a5 5 0 0 0-7.540-.540l-3 3a5 5 0 0 0 7.070 7.070l1.710-1.710"/></g></svg>
<span class="td" style="letter-spacing:-0.30px;left:344.20000000000005px;top:581px">ООО Индейка</span>
<svg style="left:717px;top:577.1px" width="29" height="28" viewBox="0 0 29 28"><rect x="0.100" y="0.200" width="28.700" height="27.600" rx="4.500" fill="#ebecf2"/><g transform="translate(3.270 3.070) scale(0.857)" fill="none" stroke="#43a0bf" stroke-width="2.650" stroke-linecap="round" stroke-linejoin="round"><path d="M10 13a5 5 0 0 0 7.540.540l3-3a5 5 0 0 0-7.070-7.070l-1.720 1.710"/><path d="M14 11a5 5 0 0 0-7.540-.540l-3 3a5 5 0 0 0 7.070 7.070l1.710-1.710"/></g></svg>
<span class="td" style="letter-spacing:-0.48px;left:750.2px;top:581px">Кафе Quic...</span>
<span class="td" style="letter-spacing:0.17px;right:484.7px;top:581px">1 200,00</span>
<svg style="left:1193px;top:581px" width="18" height="14" viewBox="0 0 18 14"><path d="M1.8 7.6L6.4 12L16.2 2" stroke="#27b384" stroke-width="2.6" stroke-linecap="round" stroke-linejoin="round" fill="none"/></svg>
<svg style="left:1319px;top:579px" width="18" height="18" viewBox="0 0 18 18"><path d="M2 2L16 16M16 2L2 16" stroke="#6f818d" stroke-width="2.100" stroke-linecap="round" fill="none"/></svg>
<div class="hline" style="left:0;top:616px;width:1582px"></div>
<span class="td" style="letter-spacing:0.17px;left:14.800000000000011px;top:631px">ПН6</span>
<span class="td" style="letter-spacing:0.17px;left:120.69999999999999px;top:631px">21.11.2025 02:30</span>
<svg style="left:311px;top:627.1px" width="29" height="28" viewBox="0 0 29 28"><rect x="0.100" y="0.200" width="28.700" height="27.600" rx="4.500" fill="#ebecf2"/><g transform="translate(3.270 3.070) scale(0.857)" fill="none" stroke="#43a0bf" stroke-width="2.650" stroke-linecap="round" stroke-linejoin="round"><path d="M10 13a5 5 0 0 0 7.540.540l3-3a5 5 0 0 0-7.070-7.070l-1.720 1.710"/><path d="M14 11a5 5 0 0 0-7.540-.540l-3 3a5 5 0 0 0 7.070 7.070l1.710-1.710"/></g></svg>
<span class="td" style="letter-spacing:0.19px;left:344.20000000000005px;top:631px">ИП Михайлов</span>
<svg style="left:717px;top:627.1px" width="29" height="28" viewBox="0 0 29 28"><rect x="0.100" y="0.200" width="28.700" height="27.600" rx="4.500" fill="#ebecf2"/><g transform="translate(3.270 3.070) scale(0.857)" fill="none" stroke="#43a0bf" stroke-width="2.650" stroke-linecap="round" stroke-linejoin="round"><path d="M10 13a5 5 0 0 0 7.540.540l3-3a5 5 0 0 0-7.070-7.070l-1.720 1.710"/><path d="M14 11a5 5 0 0 0-7.540-.540l-3 3a5 5 0 0 0 7.070 7.070l1.710-1.710"/></g></svg>
<span class="td" style="letter-spacing:0.05px;left:750.2px;top:631px">Производс...</span>
<span class="td" style="letter-spacing:0.17px;right:484.7px;top:631px">4 000,00</span>
<svg style="left:1193px;top:631px" width="18" height="14" viewBox="0 0 18 14"><path d="M1.8 7.6L6.4 12L16.2 2" stroke="#27b384" stroke-width="2.6" stroke-linecap="round" stroke-linejoin="round" fill="none"/></svg>
<svg style="left:1319px;top:629px" width="18" height="18" viewBox="0 0 18 18"><path d="M2 2L16 16M16 2L2 16" stroke="#6f818d" stroke-width="2.100" stroke-linecap="round" fill="none"/></svg>
<div class="hline" style="left:0;top:666px;width:1582px"></div>
<span class="td" style="letter-spacing:0.17px;left:14.800000000000011px;top:681px">ПН9</span>
<span class="td" style="letter-spacing:0.17px;left:120.69999999999999px;top:681px">21.11.2025 02:20</span>
<svg style="left:311px;top:677.1px" width="29" height="28" viewBox="0 0 29 28"><rect x="0.100" y="0.200" width="28.700" height="27.600" rx="4.500" fill="#ebecf2"/><g transform="translate(3.270 3.070) scale(0.857)" fill="none" stroke="#43a0bf" stroke-width="2.650" stroke-linecap="round" stroke-linejoin="round"><path d="M10 13a5 5 0 0 0 7.540.540l3-3a5 5 0 0 0-7.070-7.070l-1.720 1.710"/><path d="M14 11a5 5 0 0 0-7.540-.540l-3 3a5 5 0 0 0 7.070 7.070l1.710-1.710"/></g></svg>
<span class="td" style="letter-spacing:0.19px;left:344.20000000000005px;top:681px">ИП Михайлов</span>
<svg style="left:717px;top:677.1px" width="29" height="28" viewBox="0 0 29 28"><rect x="0.100" y="0.200" width="28.700" height="27.600" rx="4.500" fill="#ebecf2"/><g transform="translate(3.270 3.070) scale(0.857)" fill="none" stroke="#43a0bf" stroke-width="2.650" stroke-linecap="round" stroke-linejoin="round"><path d="M10 13a5 5 0 0 0 7.540.540l3-3a5 5 0 0 0-7.070-7.070l-1.720 1.710"/><path d="M14 11a5 5 0 0 0-7.540-.540l-3 3a5 5 0 0 0 7.070 7.070l1.710-1.710"/></g></svg>
<span class="td" style="letter-spacing:0.05px;left:750.2px;top:681px">Производс...</span>
<span class="td" style="letter-spacing:0.17px;right:484.7px;top:681px">12 520,00</span>
<svg style="left:1193px;top:679px" width="18" height="18" viewBox="0 0 18 18"><path d="M2 2L16 16M16 2L2 16" stroke="#6f818d" stroke-width="2.100" stroke-linecap="round" fill="none"/></svg>
<svg style="left:1319px;top:679px" width="18" height="18" viewBox="0 0 18 18"><path d="M2 2L16 16M16 2L2 16" stroke="#6f818d" stroke-width="2.100" stroke-linecap="round" fill="none"/></svg>
<div class="hline" style="left:0;top:716px;width:1582px"></div>
<span class="td" style="letter-spacing:0.17px;left:14.800000000000011px;top:731px">ПН21</span>
<span class="td" style="letter-spacing:0.17px;left:120.69999999999999px;top:731px">21.11.2025 01:44</span>
<svg style="left:311px;top:727.1px" width="29" height="28" viewBox="0 0 29 28"><rect x="0.100" y="0.200" width="28.700" height="27.600" rx="4.500" fill="#ebecf2"/><g transform="translate(3.270 3.070) scale(0.857)" fill="none" stroke="#43a0bf" stroke-width="2.650" stroke-linecap="round" stroke-linejoin="round"><path d="M10 13a5 5 0 0 0 7.540.540l3-3a5 5 0 0 0-7.070-7.070l-1.720 1.710"/><path d="M14 11a5 5 0 0 0-7.540-.540l-3 3a5 5 0 0 0 7.070 7.070l1.710-1.710"/></g></svg>
<span class="td" style="letter-spacing:0.49px;left:344.20000000000005px;top:731px">ИП рынок</span>
<svg style="left:717px;top:727.1px" width="29" height="28" viewBox="0 0 29 28"><rect x="0.100" y="0.200" width="28.700" height="27.600" rx="4.500" fill="#ebecf2"/><g transform="translate(3.270 3.070) scale(0.857)" fill="none" stroke="#43a0bf" stroke-width="2.650" stroke-linecap="round" stroke-linejoin="round"><path d="M10 13a5 5 0 0 0 7.540.540l3-3a5 5 0 0 0-7.070-7.070l-1.720 1.710"/><path d="M14 11a5 5 0 0 0-7.540-.540l-3 3a5 5 0 0 0 7.070 7.070l1.710-1.710"/></g></svg>
<span class="td" style="letter-spacing:-0.48px;left:750.2px;top:731px">Кафе Quic...</span>
<span class="td" style="letter-spacing:-0.48px;right:484.7px;top:731px">0,00</span>
<svg style="left:1193px;top:729px" width="18" height="18" viewBox="0 0 18 18"><path d="M2 2L16 16M16 2L2 16" stroke="#6f818d" stroke-width="2.100" stroke-linecap="round" fill="none"/></svg>
<svg style="left:1319px;top:729px" width="18" height="18" viewBox="0 0 18 18"><path d="M2 2L16 16M16 2L2 16" stroke="#6f818d" stroke-width="2.100" stroke-linecap="round" fill="none"/></svg>
<div class="hline" style="left:0;top:766px;width:1582px"></div>
<span class="td" style="letter-spacing:0.17px;left:14.800000000000011px;top:781px">ПН34</span>
<span class="td" style="letter-spacing:0.17px;left:120.69999999999999px;top:781px">21.11.2025 01:43</span>
<svg style="left:311px;top:777.1px" width="29" height="28" viewBox="0 0 29 28"><rect x="0.100" y="0.200" width="28.700" height="27.600" rx="4.500" fill="#ebecf2"/><g transform="translate(3.270 3.070) scale(0.857)" fill="none" stroke="#43a0bf" stroke-width="2.650" stroke-linecap="round" stroke-linejoin="round"><path d="M10 13a5 5 0 0 0 7.540.540l3-3a5 5 0 0 0-7.070-7.070l-1.720 1.710"/><path d="M14 11a5 5 0 0 0-7.540-.540l-3 3a5 5 0 0 0 7.070 7.070l1.710-1.710"/></g></svg>
<span class="td" style="letter-spacing:-0.06px;left:344.20000000000005px;top:781px">Лепихина А.С А.</span>
<svg style="left:717px;top:777.1px" width="29" height="28" viewBox="0 0 29 28"><rect x="0.100" y="0.200" width="28.700" height="27.600" rx="4.500" fill="#ebecf2"/><g transform="translate(3.270 3.070) scale(0.857)" fill="none" stroke="#43a0bf" stroke-width="2.650" stroke-linecap="round" stroke-linejoin="round"><path d="M10 13a5 5 0 0 0 7.540.540l3-3a5 5 0 0 0-7.070-7.070l-1.720 1.710"/><path d="M14 11a5 5 0 0 0-7.540-.540l-3 3a5 5 0 0 0 7.070 7.070l1.710-1.710"/></g></svg>
<span class="td" style="letter-spacing:0.22px;left:750.2px;top:781px">Склад 5</span>
<span class="td" style="letter-spacing:-0.17px;right:484.7px;top:781px">1 500,00</span>
<svg style="left:1193px;top:781px" width="18" height="14" viewBox="0 0 18 14"><path d="M1.8 7.6L6.4 12L16.2 2" stroke="#27b384" stroke-width="2.6" stroke-linecap="round" stroke-linejoin="round" fill="none"/></svg>
<svg style="left:1319px;top:779px" width="18" height="18" viewBox="0 0 18 18"><path d="M2 2L16 16M16 2L2 16" stroke="#6f818d" stroke-width="2.100" stroke-linecap="round" fill="none"/></svg>
<div class="hline" style="left:0;top:816px;width:1582px"></div>
<span class="td" style="letter-spacing:0.17px;left:14.800000000000011px;top:831px">ПН33</span>
<span class="td" style="letter-spacing:0.17px;left:120.69999999999999px;top:831px">21.11.2025 01:40</span>
<svg style="left:311px;top:827.1px" width="29" height="28" viewBox="0 0 29 28"><rect x="0.100" y="0.200" width="28.700" height="27.600" rx="4.500" fill="#ebecf2"/><g transform="translate(3.270 3.070) scale(0.857)" fill="none" stroke="#43a0bf" stroke-width="2.650" stroke-linecap="round" stroke-linejoin="round"><path d="M10 13a5 5 0 0 0 7.540.540l3-3a5 5 0 0 0-7.070-7.070l-1.720 1.710"/><path d="M14 11a5 5 0 0 0-7.540-.540l-3 3a5 5 0 0 0 7.070 7.070l1.710-1.710"/></g></svg>
<span class="td" style="letter-spacing:-0.06px;left:344.20000000000005px;top:831px">Лепихина А.С А.</span>
<svg style="left:717px;top:827.1px" width="29" height="28" viewBox="0 0 29 28"><rect x="0.100" y="0.200" width="28.700" height="27.600" rx="4.500" fill="#ebecf2"/><g transform="translate(3.270 3.070) scale(0.857)" fill="none" stroke="#43a0bf" stroke-width="2.650" stroke-linecap="round" stroke-linejoin="round"><path d="M10 13a5 5 0 0 0 7.540.540l3-3a5 5 0 0 0-7.070-7.070l-1.720 1.710"/><path d="M14 11a5 5 0 0 0-7.540-.540l-3 3a5 5 0 0 0 7.070 7.070l1.710-1.710"/></g></svg>
<span class="td" style="letter-spacing:0.22px;left:750.2px;top:831px">Склад 5</span>
<span class="td" style="letter-spacing:0.17px;right:484.7px;top:831px">2 000,00</span>
<svg style="left:1193px;top:831px" width="18" height="14" viewBox="0 0 18 14"><path d="M1.8 7.6L6.4 12L16.2 2" stroke="#27b384" stroke-width="2.6" stroke-linecap="round" stroke-linejoin="round" fill="none"/></svg>
<svg style="left:1319px;top:829px" width="18" height="18" viewBox="0 0 18 18"><path d="M2 2L16 16M16 2L2 16" stroke="#6f818d" stroke-width="2.100" stroke-linecap="round" fill="none"/></svg>
<div class="hline" style="left:0;top:866px;width:1582px"></div>
<span class="td" style="letter-spacing:0.17px;left:14.800000000000011px;top:881px">ПН32</span>
<span class="td" style="letter-spacing:0.17px;left:120.69999999999999px;top:881px">21.11.2025 01:39</span>
<svg style="left:311px;top:877.1px" width="29" height="28" viewBox="0 0 29 28"><rect x="0.100" y="0.200" width="28.700" height="27.600" rx="4.500" fill="#ebecf2"/><g transform="translate(3.270 3.070) scale(0.857)" fill="none" stroke="#43a0bf" stroke-width="2.650" stroke-linecap="round" stroke-linejoin="round"><path d="M10 13a5 5 0 0 0 7.540.540l3-3a5 5 0 0 0-7.070-7.070l-1.720 1.710"/><path d="M14 11a5 5 0 0 0-7.540-.540l-3 3a5 5 0 0 0 7.070 7.070l1.710-1.710"/></g></svg>
<span class="td" style="letter-spacing:-0.06px;left:344.20000000000005px;top:881px">Лепихина А.С А.</span>
<svg style="left:717px;top:877.1px" width="29" height="28" viewBox="0 0 29 28"><rect x="0.100" y="0.200" width="28.700" height="27.600" rx="4.500" fill="#ebecf2"/><g transform="translate(3.270 3.070) scale(0.857)" fill="none" stroke="#43a0bf" stroke-width="2.650" stroke-linecap="round" stroke-linejoin="round"><path d="M10 13a5 5 0 0 0 7.540.540l3-3a5 5 0 0 0-7.070-7.070l-1.720 1.710"/><path d="M14 11a5 5 0 0 0-7.540-.540l-3 3a5 5 0 0 0 7.070 7.070l1.710-1.710"/></g></svg>
<span class="td" style="letter-spacing:-0.48px;left:750.2px;top:881px">Кафе Quic...</span>
<span class="td" style="letter-spacing:0.17px;right:484.7px;top:881px">1 000,00</span>
<svg style="left:1193px;top:881px" width="18" height="14" viewBox="0 0 18 14"><path d="M1.8 7.6L6.4 12L16.2 2" stroke="#27b384" stroke-width="2.6" stroke-linecap="round" stroke-linejoin="round" fill="none"/></svg>
<svg style="left:1319px;top:879px" width="18" height="18" viewBox="0 0 18 18"><path d="M2 2L16 16M16 2L2 16" stroke="#6f818d" stroke-width="2.100" stroke-linecap="round" fill="none"/></svg>
<div style="left:0;top:896px;width:1582px;height:50px;background:#fff"></div>
<div class="hline" style="left:0;top:896px;width:1582px"></div>
<div class="vline" style="left:105px;top:896px;height:50px"></div>
<div class="vline" style="left:295px;top:896px;height:50px"></div>
<div class="vline" style="left:701px;top:896px;height:50px"></div>
<div class="vline" style="left:860px;top:896px;height:50px"></div>
<div class="vline" style="left:999px;top:896px;height:50px"></div>
<div class="vline" style="left:1139px;top:896px;height:50px"></div>
<div class="vline" style="left:1265px;top:896px;height:50px"></div>
<div class="vline" style="left:1391px;top:896px;height:50px"></div>
<div class="vline" style="left:1581px;top:896px;height:50px"></div>
<span class="td b" style="letter-spacing:-0.63px;left:14.800000000000011px;top:912px">ИТОГО:</span>
<span class="td b" style="letter-spacing:0.06px;right:485.4px;top:912px">119 023,41</span>
<div style="left:1589px;top:123.7px;width:11px;height:764.800px;border-radius:5.500px;background:#e9eaed"></div>
<div style="left:1589px;top:123.7px;width:11px;height:215px;border-radius:5.500px;background:#c9cace"></div>
</div>
</body>
</html>
